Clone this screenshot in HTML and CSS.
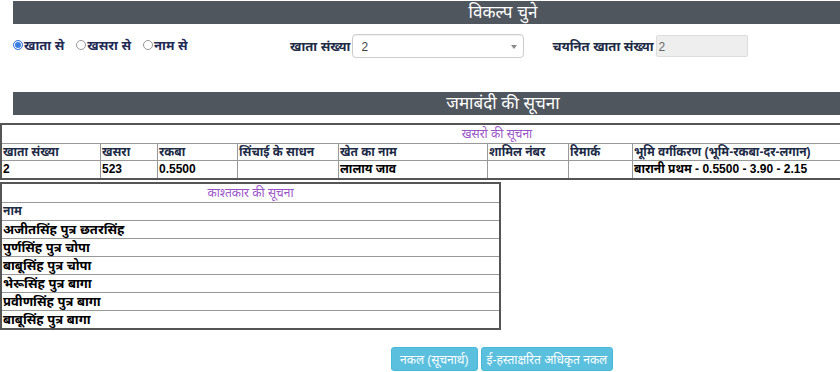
FILE: index.html
```html
<!DOCTYPE html>
<html lang="hi">
<head>
<meta charset="utf-8">
<title>जमाबंदी</title>
<link rel="stylesheet" href="styles.css">
</head>
<body>
<div class="page">
  <div class="bar">विकल्प चुने</div>
  <div class="form-row">
    <div class="radios">
      <label class="radio"><span class="dot on"></span>खाता से</label>
      <label class="radio"><span class="dot"></span>खसरा से</label>
      <label class="radio"><span class="dot"></span>नाम से</label>
    </div>
    <label class="flabel">खाता संख्या</label>
    <div class="select">2<span class="caret"></span></div>
    <label class="flabel second">चयनित खाता संख्या</label>
    <div class="ro-input">2</div>
  </div>
  <div class="bar bar2">जमाबंदी की सूचना</div>

  <table class="khasra">
    <tr class="caprow"><td colspan="8" class="cap">खसरो की सूचना</td></tr>
    <tr class="head">
      <td class="c1">खाता संख्या</td>
      <td class="c2">खसरा</td>
      <td class="c3">रकबा</td>
      <td class="c4">सिंचाई के साधन</td>
      <td class="c5">खेत का नाम</td>
      <td class="c6">शामिल नंबर</td>
      <td class="c7">रिमार्क</td>
      <td class="c8">भूमि वर्गीकरण (भूमि-रकबा-दर-लगान)</td>
    </tr>
    <tr class="data">
      <td>2</td>
      <td>523</td>
      <td>0.5500</td>
      <td></td>
      <td>लालाय जाव</td>
      <td></td>
      <td></td>
      <td>बारानी प्रथम - 0.5500 - 3.90 - 2.15</td>
    </tr>
  </table>

  <table class="owners">
    <tr class="caprow"><td class="cap">काश्तकार की सूचना</td></tr>
    <tr class="head"><td>नाम</td></tr>
    <tr class="data"><td>अजीतसिंह पुत्र छतरसिंह</td></tr>
    <tr class="data"><td>पुर्णसिंह पुत्र चोपा</td></tr>
    <tr class="data"><td>बाबूसिंह पुत्र चोपा</td></tr>
    <tr class="data"><td>भेरूसिंह पुत्र बागा</td></tr>
    <tr class="data"><td>प्रवीणसिंह पुत्र बागा</td></tr>
    <tr class="data"><td>बाबूसिंह पुत्र बागा</td></tr>
  </table>

  <div class="buttons">
    <button class="btn">नकल (सूचनार्थ)</button>
    <button class="btn narrow">ई-हस्ताक्षरित अधिकृत नकल</button>
  </div>
</div>
</body>
</html>
```

FILE: styles.css
```css
html, body {
  margin: 0;
  padding: 0;
  overflow: hidden;
  background: #fff;
}
body {
  font-family: "Liberation Sans", "Noto Sans", "Noto Sans Devanagari", Arial, sans-serif;
  color: #000;
  width: 840px;
  height: 372px;
}
.page {
  width: 1000px;
  padding-top: 1px;
}
.bar {
  margin-left: 13px;
  width: 980px;
  height: 23px;
  background: #50565e;
  color: #fff;
  font-size: 17px;
  line-height: 23px;
  text-align: center;
}
.form-row {
  display: flex;
  height: 68px;
  padding-left: 13px;
  box-sizing: border-box;
  align-items: flex-start;
  padding-top: 10px;
}
.radios {
  display: flex;
  width: 277px;
  gap: 12px;
  padding-top: 2px;
}
.radio {
  display: flex;
  align-items: center;
  font-size: 13px;
  font-weight: bold;
  color: #1f2a55;
}
.dot {
  width: 10px;
  height: 10px;
  border: 1px solid #999;
  border-radius: 50%;
  margin-right: 1px;
  box-sizing: border-box;
  background: #fff;
}
.dot.on {
  border-color: #3b7de0;
  background: #3b7de0;
  box-shadow: inset 0 0 0 1px #fff;
}
.flabel {
  font-size: 13px;
  font-weight: bold;
  color: #1d2b46;
  margin-top: 3px;
  margin-right: 2px;
}
.flabel.second {
  margin-left: 28px;
}
.select {
  position: relative;
  width: 172px;
  height: 24px;
  border: 1px solid #ccc;
  border-radius: 4px;
  box-sizing: border-box;
  font-size: 12px;
  color: #444;
  padding: 5px 8px;
  box-shadow: inset 0 1px 1px rgba(0,0,0,.06);
}
.caret {
  position: absolute;
  right: 6px;
  top: 10px;
  border-left: 3px solid transparent;
  border-right: 3px solid transparent;
  border-top: 4px solid #888;
}
.ro-input {
  width: 92px;
  height: 22px;
  border: 1px solid #ddd;
  border-radius: 2px;
  box-sizing: border-box;
  background: #eee;
  font-size: 12px;
  color: #666;
  padding: 4px 2px;
  margin-top: 1px;
}
table {
  border-collapse: collapse;
  font-size: 12px;
  font-weight: bold;
}
td {
  padding: 0 1px;
  border: 1px solid #999;
  text-align: left;
  white-space: nowrap;
  line-height: 15px;
}
.khasra {
  width: 994px;
  margin-top: 8px;
  border: 2px solid #555;
}
.cap {
  color: #9a55c8;
  font-style: italic;
  font-weight: normal;
  text-align: center;
  font-size: 12px;
}
.caprow td { height: 18px; }
.head td {
  color: #1d2b46;
  height: 16px;
}
.data td {
  height: 17px;
}
.owners .head td { height: 17px; }
.c1 { width: 96px; }
.c2 { width: 54px; }
.c3 { width: 77px; }
.c4 { width: 98px; }
.c5 { width: 146px; }
.c6 { width: 78px; }
.c7 { width: 61px; }
.owners {
  width: 501px;
  margin-top: 2px;
  border: 2px solid #555;
}
.owners .data td {
  font-size: 13px;
}
.buttons {
  display: flex;
  gap: 3px;
  margin-left: 391px;
  margin-top: 17px;
}
.btn {
  background: #5bc0de;
  border: 1px solid #46b8da;
  border-radius: 3px;
  color: #fff;
  font-family: inherit;
  font-size: 12px;
  height: 24px;
  padding: 0 8px;
}
.btn.narrow {
  padding: 0 5px;
}
```
